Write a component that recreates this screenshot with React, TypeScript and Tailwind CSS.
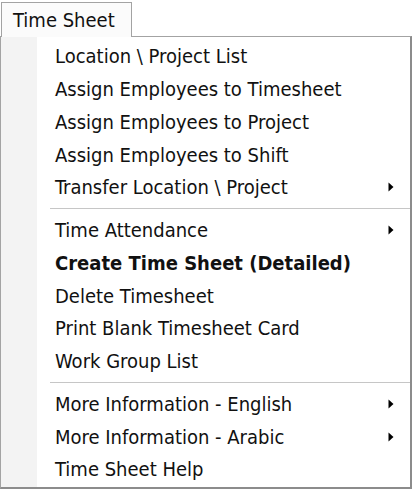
import React from "react";

type Item = { label: string; arrow?: boolean; bold?: boolean } | "sep";

const items: Item[] = [
  { label: "Location \\ Project List" },
  { label: "Assign Employees to Timesheet" },
  { label: "Assign Employees to Project" },
  { label: "Assign Employees to Shift" },
  { label: "Transfer Location \\ Project", arrow: true },
  "sep",
  { label: "Time Attendance", arrow: true },
  { label: "Create Time Sheet (Detailed)", bold: true },
  { label: "Delete Timesheet" },
  { label: "Print Blank Timesheet Card" },
  { label: "Work Group List" },
  "sep",
  { label: "More Information - English", arrow: true },
  { label: "More Information - Arabic", arrow: true },
  { label: "Time Sheet Help" },
];

function Arrow() {
  return (
    <svg width="6" height="10" viewBox="0 0 6 10" className="block">
      <path d="M0.5 0.5 L5.5 5 L0.5 9.5 Z" fill="#000" />
    </svg>
  );
}

export default function App() {
  return (
    <div
      className="w-[413px] h-[490px] bg-white relative text-[20px] text-[#111]"
      style={{ fontFamily: '"DejaVu Sans Condensed", "DejaVu Sans", sans-serif' }}
    >
      <div className="pt-[2px] pl-[1px] flex">
        <div className="w-[131px] h-[35px] border border-b-0 border-[#a3a3a3] bg-[#fbfbfb] flex items-center pl-[11px] relative z-10 leading-none">
          Time Sheet
        </div>
      </div>
      <div className="w-[412px] h-[453px] border-l border-t border-[#a3a3a3] border-r-2 border-b-2 border-r-[#8c8c8c] border-b-[#8c8c8c] -mt-[1px] flex">
        <div className="w-[36px] bg-[#f3f3f3] shrink-0" />
        <div className="flex-1 flex flex-col pt-[3px]">
          {items.map((it, i) =>
            it === "sep" ? (
              <div key={i} className="h-[10px] flex items-center pl-[13px]">
                <div className="h-[1px] w-full bg-[#c6c6c6]" />
              </div>
            ) : (
              <div
                key={i}
                className={`h-[32.75px] flex items-center pl-[18px] pr-[16px] leading-none ${
                  it.bold ? "font-bold" : ""
                }`}
              >
                <span className="flex-1 whitespace-nowrap">{it.label}</span>
                {it.arrow && <Arrow />}
              </div>
            )
          )}
        </div>
      </div>
    </div>
  );
}
